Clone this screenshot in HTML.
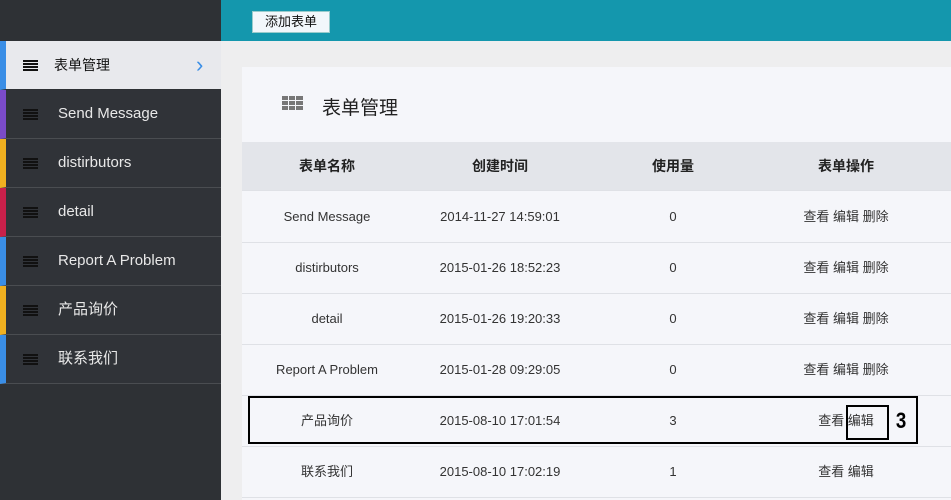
<!DOCTYPE html>
<html><head><meta charset="utf-8"><style>
*{margin:0;padding:0;box-sizing:border-box}
body{width:951px;height:500px;overflow:hidden;position:relative;background:#eeeeef;font-family:"Liberation Sans","Noto Sans CJK SC",sans-serif}
.side{position:absolute;left:0;top:0;width:221px;height:500px;background:#2e3135}
.top{position:absolute;left:221px;top:0;width:730px;height:41px;background:#1497ad}
.btn{position:absolute;left:252px;top:11px;width:78px;height:22px;background:#f2f7fb;border:1px solid #9cc;font-size:13px;text-align:center;line-height:20px;color:#111}
.item{position:absolute;left:0;width:221px;height:49px;border-left:6px solid;border-bottom:1px solid #4a4d51;color:#e8e8e8;font-size:15px;line-height:48px;padding-left:52px;background:#303338}
.item.act{background:#e8e9ed;color:#111;font-size:14px;padding-left:48px;border-bottom-color:#2e3135}
.ic{position:absolute;left:17px;top:19px;width:15px;height:11px;background:repeating-linear-gradient(#111 0 2px,transparent 2px 3px)}
.panel{position:absolute;left:242px;top:67px;width:709px;height:433px;background:#f5f6fa}
.h{position:absolute;left:80px;top:26px;font-size:19px;color:#222}
.grid{position:absolute;left:40px;top:29px;width:21px;height:14px;background:
linear-gradient(90deg,#777 0 6px,transparent 6px 7px,#777 7px 13px,transparent 13px 14px,#777 14px 21px)}
.grid:after{content:"";position:absolute;left:0;right:0;top:4px;height:1px;background:#f5f6fa;box-shadow:0 5px 0 #f5f6fa}
.row{position:absolute;left:242px;width:709px;height:51px;border-bottom:1px solid #dfe1e6;font-size:13px;color:#333}
.row span{position:absolute;top:0;line-height:50px;transform:translateX(-50%);white-space:nowrap}
.hd{background:#e3e5ea;font-weight:bold;font-size:14px;color:#222;height:49px;top:142px}
.hd span{line-height:49px}
</style></head><body>
<div class="side"></div>
<div class="top"></div>
<div class="btn">添加表单</div>
<div class="item act" style="top:41px;border-left-color:#3a8ee6">表单管理<div class="ic"></div><span style="position:absolute;left:190px;top:0;color:#3a8ee6;font-size:22px">›</span></div>
<div class="item" style="top:90px;border-left-color:#7b4bc9"><div class="ic"></div>Send Message</div>
<div class="item" style="top:139px;border-left-color:#f0b020"><div class="ic"></div>distirbutors</div>
<div class="item" style="top:188px;border-left-color:#c8204a"><div class="ic"></div>detail</div>
<div class="item" style="top:237px;border-left-color:#3a8ee6"><div class="ic"></div>Report A Problem</div>
<div class="item" style="top:286px;border-left-color:#f0b020"><div class="ic"></div>产品询价</div>
<div class="item" style="top:335px;border-left-color:#3a8ee6"><div class="ic"></div>联系我们</div>
<div class="panel"><div class="grid"></div><div class="h">表单管理</div></div>
<div class="row hd"><span style="left:85px">表单名称</span><span style="left:258px">创建时间</span><span style="left:431px">使用量</span><span style="left:604px">表单操作</span></div>
<div class="row" style="top:192px"><span style="left:85px">Send Message</span><span style="left:258px">2014-11-27 14:59:01</span><span style="left:431px">0</span><span style="left:604px">查看 编辑 删除</span></div>
<div class="row" style="top:243px"><span style="left:85px">distirbutors</span><span style="left:258px">2015-01-26 18:52:23</span><span style="left:431px">0</span><span style="left:604px">查看 编辑 删除</span></div>
<div class="row" style="top:294px"><span style="left:85px">detail</span><span style="left:258px">2015-01-26 19:20:33</span><span style="left:431px">0</span><span style="left:604px">查看 编辑 删除</span></div>
<div class="row" style="top:345px"><span style="left:85px">Report A Problem</span><span style="left:258px">2015-01-28 09:29:05</span><span style="left:431px">0</span><span style="left:604px">查看 编辑 删除</span></div>
<div class="row" style="top:396px"><span style="left:85px">产品询价</span><span style="left:258px">2015-08-10 17:01:54</span><span style="left:431px">3</span><span style="left:604px">查看 编辑</span></div>
<div class="row" style="top:447px"><span style="left:85px">联系我们</span><span style="left:258px">2015-08-10 17:02:19</span><span style="left:431px">1</span><span style="left:604px">查看 编辑</span></div>
<div style="position:absolute;left:248px;top:396px;width:670px;height:48px;border:2px solid #000"></div>
<div style="position:absolute;left:846px;top:405px;width:43px;height:35px;border:2px solid #000"></div>
<div style="position:absolute;left:895px;top:408px;font-size:22px;font-weight:bold;transform:scaleX(0.85)">3</div>
</body></html>
